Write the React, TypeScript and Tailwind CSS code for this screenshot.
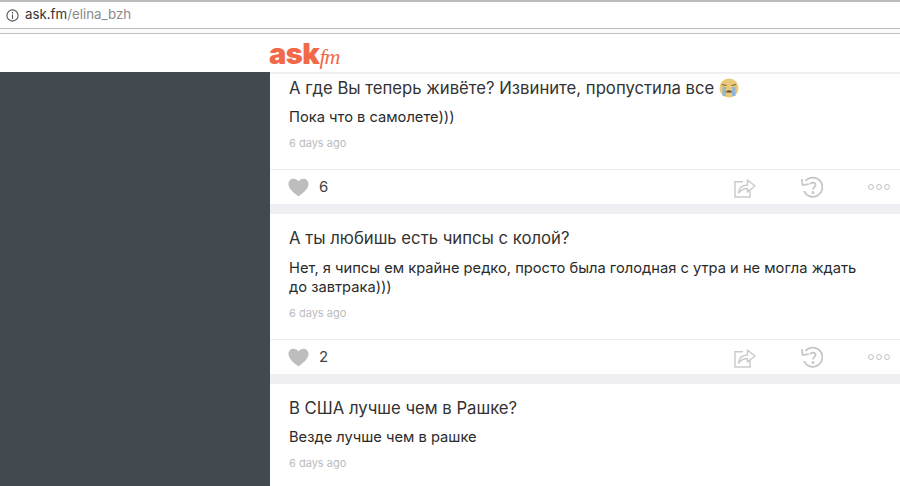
import React from 'react';

const font = { fontFamily: 'Inter, "Open Sans", "Liberation Sans", sans-serif' };

const HeartIcon = () => (
  <svg width="21" height="19" viewBox="0 0 21 19" className="shrink-0">
    <path d="M10.5 18.5 C7 15.5 0.5 11.5 0.5 6 C0.5 2.8 2.8 0.8 5.6 0.8 C7.6 0.8 9.4 1.8 10.5 3.6 C11.6 1.8 13.4 0.8 15.4 0.8 C18.2 0.8 20.5 2.8 20.5 6 C20.5 11.5 14 15.5 10.5 18.5 Z" fill="#bdbdbd" />
  </svg>
);

const ShareIcon = () => (
  <svg width="22" height="21" viewBox="0 0 22 21" fill="none" stroke="#cbcbcb" strokeWidth="1.5">
    <path d="M9 4.8 H1 V20 H16 V13" />
    <path d="M4.5 16 C5 11 8.5 8.2 13.5 8 V3 L21 9 L13.5 15 V11.4 C10 11.4 7 12.8 4.5 16 Z" strokeLinejoin="round" />
  </svg>
);

const ReaskIcon = () => (
  <svg width="23" height="22" viewBox="0 0 23 22" fill="none" stroke="#c6c6c6" strokeWidth="1.8">
    <path d="M5.5 5 A9.6 9.6 0 1 1 4 15" />
    <path d="M1.8 3 L2.6 9 L8.8 8.2" strokeWidth="1.7" />
    <path d="M10.2 8.4 C10.4 6 15.6 6 15.6 9 C15.6 11 13 11 13 13.6" strokeWidth="1.7" />
    <circle cx="13" cy="16.4" r="0.6" fill="#c6c6c6" />
  </svg>
);

const CryingEmoji = () => (
  <svg width="20" height="20" viewBox="0 0 20 20" className="shrink-0">
    <circle cx="10" cy="10" r="9.5" fill="#e9c878" />
    <path d="M3 6.5 L7.5 7.5 M17 6.5 L12.5 7.5" stroke="#7a6338" strokeWidth="1.2" />
    <path d="M3.5 9 H7 V18 H3.5 Z M13 9 H16.5 V18 H13 Z" fill="#8fb6d6" />
    <path d="M7 14.5 C7.5 11.5 12.5 11.5 13 14.5 Z" fill="#6b4a32" />
  </svg>
);

const Actions = ({ likes }: { likes: number }) => (
  <div className="h-[35px] border-t border-[#ececec] flex items-center pl-[18px]">
    <HeartIcon />
    <span className="ml-[10px] text-[15px] text-[#444]">{likes}</span>
    <div className="ml-auto flex items-center">
      <ShareIcon />
      <div className="ml-[44px]"><ReaskIcon /></div>
      <div className="ml-[45px] mr-[10px] flex gap-[2px]">
        <span className="w-[6px] h-[6px] rounded-full border border-[#c2c2c2]" />
        <span className="w-[6px] h-[6px] rounded-full border border-[#c2c2c2]" />
        <span className="w-[6px] h-[6px] rounded-full border border-[#c2c2c2]" />
      </div>
    </div>
  </div>
);

const Card = ({ question, answer, emoji, likes, padTop, answerGap, last }: {
  question: string;
  answer: string;
  emoji?: boolean;
  likes?: number;
  padTop: string;
  answerGap: string;
  last?: boolean;
}) => (
  <div className={last ? '' : 'border-b-[10px] border-[#eeeef3]'}>
    <div className={`px-[19px] ${padTop} ${last ? '' : 'pb-[18px]'}`}>
      <div className="flex items-center gap-[5px] text-[16.7px] leading-[24px] text-[#333]">
        {question}
        {emoji && <CryingEmoji />}
      </div>
      <div className={`${answerGap} text-[14.7px] leading-[19px] text-[#2b2b2b] w-[585px]`}>{answer}</div>
      <div className="mt-[9px] text-[11px] leading-[15px] text-[#bcbcbc]">6 days ago</div>
    </div>
    {likes !== undefined && <Actions likes={likes} />}
  </div>
);

export default function App() {
  return (
    <div className="w-[900px] h-[486px] overflow-hidden bg-white flex flex-col" style={font}>
      {/* browser address bar */}
      <div className="h-[29px] border-t-2 border-b border-[#bdbdbd] flex items-center pl-[6px] shrink-0">
        <svg width="13" height="13" viewBox="0 0 13 13" fill="none" stroke="#555" strokeWidth="1.1">
          <circle cx="6.5" cy="6.5" r="5.6" />
          <path d="M6.5 5.6 V10 M6.5 3 V4.4" />
        </svg>
        <span className="ml-[6px] text-[13.3px] text-[#333]">ask.fm<span className="text-[#8a8a8a]">/elina_bzh</span></span>
      </div>
      <div className="h-[5px] border-b border-[#c4c4c4] bg-[#fafafa] shrink-0" />
      {/* site header */}
      <div className="h-[38px] pl-[269px] flex items-center shrink-0">
        <span className="flex items-baseline text-[#f2694a] leading-none mt-[1px]">
          <span className="text-[29px] tracking-[-0.5px]" style={{ fontFamily: 'Inter, sans-serif', fontWeight: 900 }}>ask</span>
          <span className="text-[22px] italic tracking-[-1px]" style={{ fontFamily: '"Liberation Serif", serif' }}>fm</span>
        </span>
      </div>
      <div className="flex flex-1 min-h-0">
        <div className="w-[270px] bg-[#42494f] shrink-0" />
        <div className="flex-1 border-t-2 border-[#efefef]">
          <Card padTop="pt-[2px]" answerGap="mt-[8px]" question="А где Вы теперь живёте? Извините, пропустила все" emoji answer="Пока что в самолете)))" likes={6} />
          <Card padTop="pt-[12px]" answerGap="mt-[9px]" question="А ты любишь есть чипсы с колой?" answer="Нет, я чипсы ем крайне редко, просто была голодная с утра и не могла ждать до завтрака)))" likes={2} />
          <Card padTop="pt-[12px]" answerGap="mt-[8px]" question="В США лучше чем в Рашке?" answer="Везде лучше чем в рашке" last />
        </div>
      </div>
    </div>
  );
}
